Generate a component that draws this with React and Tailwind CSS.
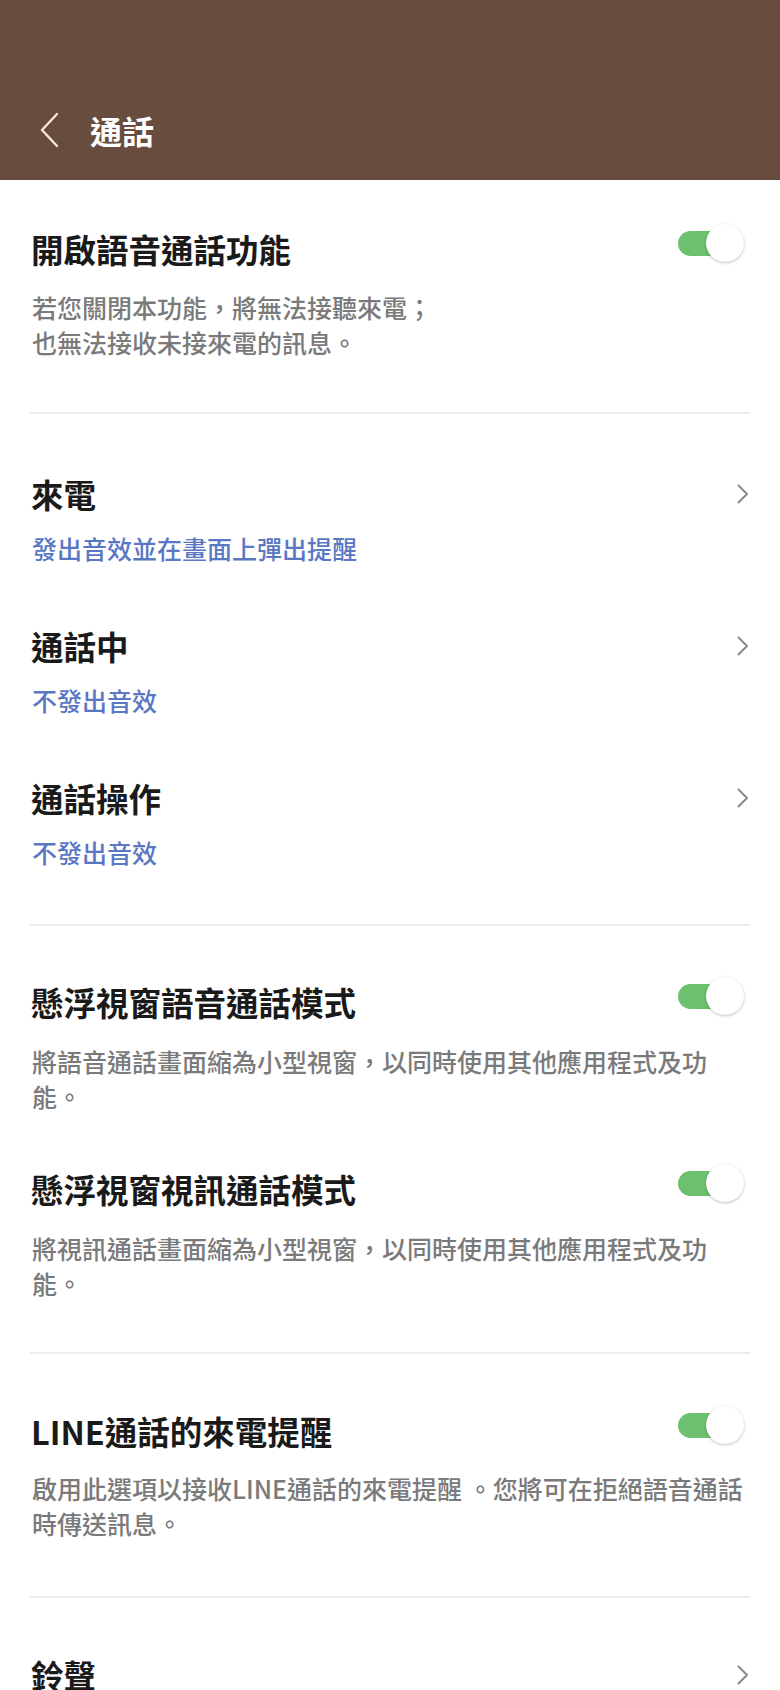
import React from "react";

const SUB_BLUE = "text-[#5a77c4]";

function Chevron() {
  return (
    <svg width="14" height="22" viewBox="0 0 14 22" className="shrink-0">
      <path d="M2.5 2.5 L11 11 L2.5 19.5" fill="none" stroke="#8a8a8a" strokeWidth="2" strokeLinecap="round" strokeLinejoin="round" />
    </svg>
  );
}

function Toggle() {
  return (
    <div className="relative w-[66px] h-[40px] shrink-0 mr-[6px] -mt-[12px]">
      <div className="absolute left-0 top-[8px] w-[56px] h-[25px] rounded-full bg-[#6dc06e]" />
      <div className="absolute right-0 top-px w-[38px] h-[38px] rounded-full bg-white shadow-[0_1px_3px_rgba(0,0,0,0.25)]" />
    </div>
  );
}

function Divider() {
  return <div className="h-[2px] bg-[#ececec]" />;
}

function ToggleRow({ title, lines, gap = "mt-[22px]" }) {
  return (
    <div>
      <div className="flex items-center justify-between h-[40px]">
        <div className="text-[32.5px] leading-[40px] font-bold text-[#1a1a1a] pl-[1px]">{title}</div>
        <Toggle />
      </div>
      <div className={gap + " text-[25px] leading-[35px] font-medium text-[#7a7a7a] pl-[2px]"}>
        {lines.map((l) => (
          <div key={l} className="whitespace-nowrap">{l}</div>
        ))}
      </div>
    </div>
  );
}

function NavRow({ title, sub }) {
  return (
    <div>
      <div className="flex items-center justify-between h-[40px]">
        <div className="text-[32.5px] leading-[40px] font-bold text-[#1a1a1a] pl-[1px]">{title}</div>
        <Chevron />
      </div>
      {sub && <div className={"mt-[17px] text-[25px] leading-[35px] font-medium pl-[2px] " + SUB_BLUE}>{sub}</div>}
    </div>
  );
}

export default function App() {
  return (
    <div className="w-[780px] min-h-[1690px] bg-white overflow-hidden font-['Noto_Sans_CJK_TC','Noto_Sans',sans-serif]">
      {/* header */}
      <div className="h-[180px] bg-[#684c3e] flex items-end">
        <div className="h-[98px] w-full flex items-center pl-[39px] pb-[3px]">
          <svg width="22" height="36" viewBox="0 0 22 36">
            <path d="M18 2 L3 18 L18 34" fill="none" stroke="#f6e7dc" strokeWidth="2.4" strokeLinecap="round" strokeLinejoin="round" />
          </svg>
          <div className="ml-[29px] text-[32px] font-bold text-white leading-none">通話</div>
        </div>
      </div>

      <div className="px-[30px]">
        <div className="pt-[49px] pb-[52px]">
          <ToggleRow
            title="開啟語音通話功能"
            gap="mt-[21px]"
            lines={["若您關閉本功能，將無法接聽來電；", "也無法接收未接來電的訊息。"]}
          />
        </div>
        <Divider />

        <div className="pt-[60px] pb-[54px] flex flex-col gap-[60px]">
          <NavRow title="來電" sub="發出音效並在畫面上彈出提醒" />
          <NavRow title="通話中" sub="不發出音效" />
          <NavRow title="通話操作" sub="不發出音效" />
        </div>
        <Divider />

        <div className="pt-[56px] pb-[51px] flex flex-col gap-[55px]">
          <ToggleRow
            title="懸浮視窗語音通話模式"
            lines={["將語音通話畫面縮為小型視窗，以同時使用其他應用程式及功", "能。"]}
          />
          <ToggleRow
            title="懸浮視窗視訊通話模式"
            lines={["將視訊通話畫面縮為小型視窗，以同時使用其他應用程式及功", "能。"]}
          />
        </div>
        <Divider />

        <div className="pt-[57px] pb-[55px]">
          <ToggleRow
            title="LINE通話的來電提醒"
            gap="mt-[20px]"
            lines={["啟用此選項以接收LINE通話的來電提醒 。您將可在拒絕語音通話", "時傳送訊息。"]}
          />
        </div>
        <Divider />

        <div className="pt-[57px] pb-[40px]">
          <NavRow title="鈴聲" />
        </div>
      </div>
    </div>
  );
}
